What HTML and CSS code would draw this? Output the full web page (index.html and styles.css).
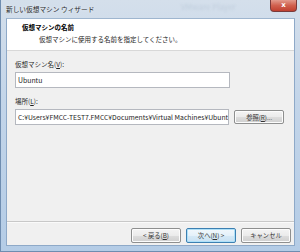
FILE: index.html
```html
<!DOCTYPE html>
<html lang="ja">
<head>
    <meta charset="UTF-8">
    <title>新しい仮想マシン ウィザード</title>
    <link rel="stylesheet" href="styles.css">
</head>
<body>
    <div class="window">
        <div class="titlebar">
            <span class="title">新しい仮想マシン ウィザード</span>
            <span class="ghost">VMware Player</span>
            <div class="close">x</div>
        </div>

        <div class="client">
            <div class="header">
                <h1>仮想マシンの名前</h1>
                <p>仮想マシンに使用する名前を指定してください。</p>
            </div>

            <div class="body">
                <label class="label">仮想マシン名(<u>V</u>):</label>
                <div class="field name-field">Ubuntu</div>

                <label class="label second">場所(<u>L</u>):</label>
                <div class="row">
                    <div class="field path-field">C:¥Users¥FMCC-TEST7.FMCC¥Documents¥Virtual Machines¥Ubuntu</div>
                    <button class="btn browse">参照(<u>R</u>)...</button>
                </div>
            </div>

            <div class="footer">
                <button class="btn">&lt; 戻る(<u>B</u>)</button>
                <button class="btn default">次へ(<u>N</u>) &gt;</button>
                <button class="btn">キャンセル</button>
            </div>
        </div>
    </div>
</body>
</html>
```

FILE: styles.css
```css
* {
    margin: 0;
    padding: 0;
    box-sizing: border-box;
}

body {
    width: 300px;
    height: 252px;
    overflow: hidden;
    font-family: "Noto Sans CJK JP", "Noto Sans", sans-serif;
    font-size: 6.5px;
    color: #1e1e1e;
    background: #b9cde4;
}

.window {
    width: 300px;
    height: 252px;
    display: flex;
    flex-direction: column;
    padding: 0 5px 5px 5px;
    background: linear-gradient(180deg, #d4dfeb 0%, #c3d5e9 40%, #b4cce6 100%);
    border-left: 1px solid #6f8db0;
    border-bottom: 1px solid #6f8db0;
}

.titlebar {
    height: 18px;
    display: flex;
    align-items: center;
    position: relative;
}

.title {
    font-size: 6.7px;
    color: #2a2a2a;
    text-shadow: 0 0 3px #eef3f8;
}

.ghost {
    position: absolute;
    left: 175px;
    top: 1px;
    font-size: 8px;
    color: #c0cedd;
    filter: blur(1px);
}

.close {
    position: absolute;
    right: -2px;
    top: 0;
    width: 27px;
    height: 12px;
    border: 1px solid #7a3a3a;
    border-top: none;
    border-radius: 0 0 4px 4px;
    background: linear-gradient(180deg, #e29a8c 0%, #d0604e 50%, #c04030 100%);
    color: #fff;
    font-family: "DejaVu Sans", sans-serif;
    font-size: 7px;
    font-weight: bold;
    text-align: center;
    line-height: 10px;
}

.client {
    flex: 1;
    display: flex;
    flex-direction: column;
    background: #f0f0f0;
    border: 1px solid #8ea9c8;
    border-top: 1px solid #9fb6cf;
}

.header {
    height: 32px;
    background: #ffffff;
    border-bottom: 1px solid #d8d8d8;
    padding: 3px 0 0 15px;
}

.header h1 {
    font-size: 6.5px;
    font-weight: bold;
    color: #000;
    line-height: 11px;
}

.header p {
    margin-top: 1px;
    padding-left: 17px;
    line-height: 11px;
}

.body {
    flex: 1;
    display: flex;
    flex-direction: column;
    padding: 8px 10px 0 8px;
    border-bottom: 1px solid #c8c8c8;
}

.label {
    line-height: 10px;
}

.label.second {
    margin-top: 8px;
}

.field {
    height: 16px;
    margin-top: 3px;
    background: #fff;
    border: 1px solid #b5b8bf;
    padding: 0 2px;
    font-size: 6.9px;
    line-height: 14px;
    white-space: nowrap;
    overflow: hidden;
    width: 215px;
}

.row {
    display: flex;
    align-items: center;
    gap: 5px;
}

.path-field {
    width: 216px;
    font-size: 6.8px;
}

.btn {
    width: 50px;
    height: 15px;
    font-family: inherit;
    font-size: 6.3px;
    color: #333;
    background: linear-gradient(180deg, #f4f4f4 0%, #ebebeb 50%, #dddddd 51%, #cfcfcf 100%);
    border: 1px solid #8e8f8f;
    border-radius: 2px;
    box-shadow: inset 0 0 0 1px #fcfcfc;
}

.browse {
    margin-top: 3px;
    height: 14px;
}

.footer {
    height: 23px;
    display: flex;
    justify-content: flex-end;
    align-items: flex-start;
    gap: 5px;
    padding: 5px 3px 0 0;
    border-top: 1px solid #fafafa;
}

.btn.default {
    border-color: #3c7fb1;
    box-shadow: inset 0 0 0 1px #aee0f8;
    background: linear-gradient(180deg, #f2f8fc 0%, #e4f1fa 50%, #d5e9f6 51%, #c9e1f3 100%);
}
```
